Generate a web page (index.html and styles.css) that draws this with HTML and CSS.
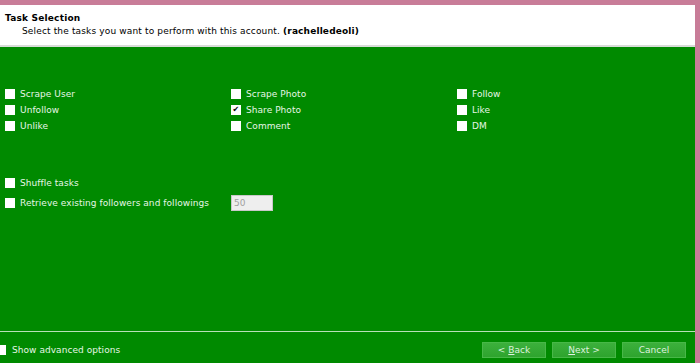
FILE: index.html
```html
<!DOCTYPE html>
<html lang="en">
<head>
    <meta charset="UTF-8">
    <title>Task Selection</title>
    <link rel="stylesheet" href="styles.css">
</head>
<body>
    <div class="window">
        <div class="header">
            <h1>Task Selection</h1>
            <p>Select the tasks you want to perform with this account. <b>(rachelledeoli)</b></p>
        </div>

        <div class="content">
            <div class="tasks">
                <label class="check"><span class="box"></span>Scrape User</label>
                <label class="check"><span class="box"></span>Scrape Photo</label>
                <label class="check"><span class="box"></span>Follow</label>
                <label class="check"><span class="box"></span>Unfollow</label>
                <label class="check"><span class="box checked">&#10004;</span>Share Photo</label>
                <label class="check"><span class="box"></span>Like</label>
                <label class="check"><span class="box"></span>Unlike</label>
                <label class="check"><span class="box"></span>Comment</label>
                <label class="check"><span class="box"></span>DM</label>
            </div>

            <div class="options">
                <label class="check"><span class="box"></span>Shuffle tasks</label>
                <div class="option-row">
                    <label class="check"><span class="box"></span>Retrieve existing followers and followings</label>
                    <div class="num-input">50</div>
                </div>
            </div>
        </div>

        <div class="footer">
            <label class="check advanced"><span class="box"></span>Show advanced options</label>
            <div class="buttons">
                <button class="btn">&lt; <u>B</u>ack</button>
                <button class="btn"><u>N</u>ext &gt;</button>
                <button class="btn">Cancel</button>
            </div>
        </div>
    </div>
</body>
</html>
```

FILE: styles.css
```css
* {
    margin: 0;
    padding: 0;
    box-sizing: border-box;
}

body {
    width: 700px;
    height: 363px;
    overflow: hidden;
    background: #c87c98;
    font-family: "DejaVu Sans", Verdana, sans-serif;
    font-size: 9px;
    letter-spacing: 0.05px;
}

.window {
    margin-top: 5px;
    width: 695px;
    height: 358px;
    display: flex;
    flex-direction: column;
    background: #008a00;
}

.header {
    background: #fff;
    height: 42px;
    padding: 8px 0 0 5px;
    border-bottom: 2px solid #d8dcd8;
    color: #000;
}

.header h1 {
    font-size: 9px;
    font-weight: bold;
    letter-spacing: 0.2px;
}

.header p {
    margin: 3px 0 0 17px;
    letter-spacing: 0.15px;
}

.content {
    flex: 1;
    color: #e6f6e6;
    padding: 41px 0 0 5px;
}

.tasks {
    display: grid;
    grid-template-columns: 226px 226px 1fr;
    row-gap: 5px;
}

.check {
    display: flex;
    align-items: center;
    height: 11px;
    white-space: nowrap;
}

.box {
    width: 10px;
    height: 10px;
    background: #fff;
    margin-right: 5px;
    flex-shrink: 0;
    color: #000;
    font-size: 8px;
    line-height: 10px;
    text-align: center;
}

.options {
    margin-top: 46px;
    display: flex;
    flex-direction: column;
    gap: 7px;
}

.option-row {
    display: flex;
    align-items: center;
}

.option-row .check {
    width: 226px;
}

.num-input {
    width: 42px;
    height: 16px;
    background: #eeeeee;
    border: 1px solid #c8c8c8;
    color: #a0a0a0;
    padding: 2px 0 0 2px;
}

.footer {
    height: 32px;
    border-top: 1px solid #b8e0b8;
    display: flex;
    align-items: center;
    justify-content: space-between;
    padding: 4px 9px 0 0;
    color: #e6f6e6;
}

.advanced .box {
    width: 6px;
    margin-right: 6px;
}

.buttons {
    display: flex;
    gap: 6px;
}

.btn {
    width: 64px;
    height: 16px;
    background: linear-gradient(#3cb03c, #2ea42e);
    border: 1px solid #48b848;
    color: #dff2df;
    font-family: inherit;
    font-size: 9px;
}
```
